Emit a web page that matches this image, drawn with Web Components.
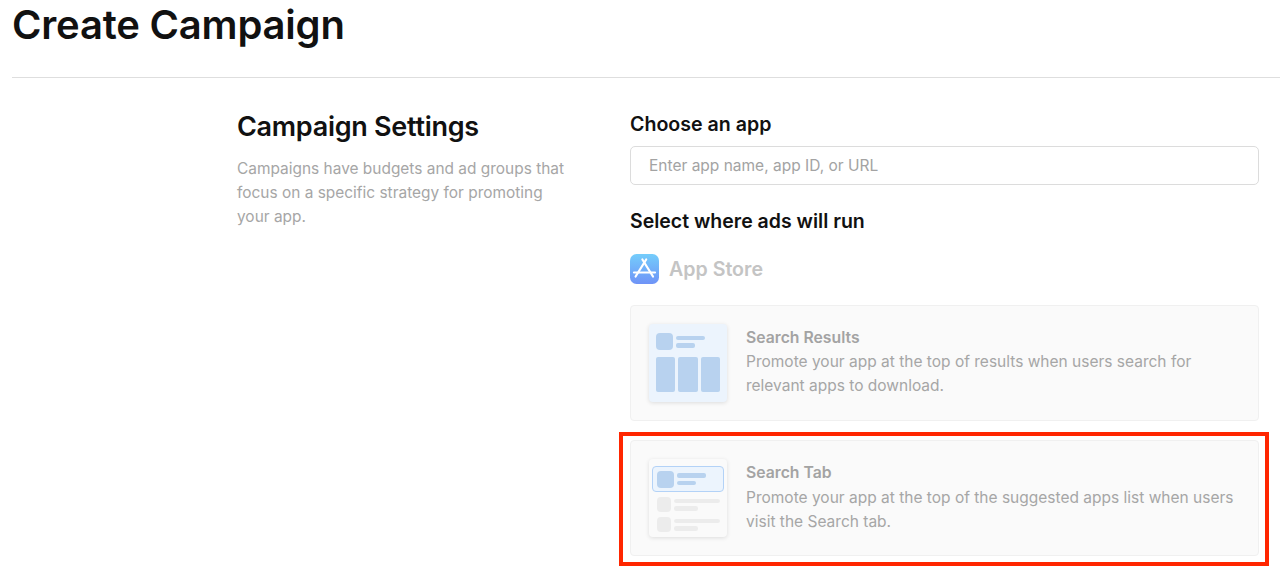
<!DOCTYPE html>
<html>
<head>
<meta charset="utf-8">
<title>Create Campaign</title>
<style>
  html, body { margin: 0; background: #fff; overflow: hidden; }
  body { font-family: Inter, "Liberation Sans", sans-serif; color: #111; height: 581px; }
</style>
</head>
<body>
<campaign-page></campaign-page>

<script>
// page title with rule under it
class PageHeader extends HTMLElement {
  constructor() {
    super();
    var shadow = this.attachShadow({mode: 'open'});
    shadow.innerHTML = `
      <style>
      :host { display: block; margin-left: 12px; height: 78px; border-bottom: 1px solid #dedede; box-sizing: border-box; }
      h1 { margin: 0; font-size: 40px; font-weight: 600; line-height: 50px; letter-spacing: -0.2px; color: #111; }
      </style>
      <h1><slot></slot></h1>
    `;
  }
}
customElements.define('page-header', PageHeader);

// left column
class SettingsIntro extends HTMLElement {
  constructor() {
    super();
    var shadow = this.attachShadow({mode: 'open'});
    shadow.innerHTML = `
      <style>
      :host { display: block; width: 340px; }
      h2 { margin: 0 0 15px; font-size: 27px; font-weight: 600; line-height: 30px; letter-spacing: -0.28px; color: #111; }
      p { margin: 0; font-size: 15.45px; line-height: 24px; color: #a6a6a6; }
      </style>
      <h2><slot name="title"></slot></h2>
      <p><slot></slot></p>
    `;
  }
}
customElements.define('settings-intro', SettingsIntro);

class AppField extends HTMLElement {
  constructor() {
    super();
    var shadow = this.attachShadow({mode: 'open'});
    shadow.innerHTML = `
      <style>
      :host { display: block; }
      label { display: block; font-size: 19.6px; font-weight: 600; line-height: 24px; color: #111; margin-bottom: 10px; }
      .box { box-sizing: border-box; height: 39px; border: 1.5px solid #dcdcdc; border-radius: 5px; padding: 0 18px; display: flex; align-items: center; font-size: 15.5px; color: #a3a3a3; }
      </style>
      <label><slot name="label"></slot></label>
      <div class="box"><slot></slot></div>
    `;
  }
}
customElements.define('app-field', AppField);

class StoreHeading extends HTMLElement {
  constructor() {
    super();
    var shadow = this.attachShadow({mode: 'open'});
    shadow.innerHTML = `
      <style>
      :host { display: flex; align-items: center; gap: 10px; height: 30px; font-size: 19.6px; font-weight: 600; color: #c4c4c4; }
      svg { display: block; width: 29px; height: 30px; }
      </style>
      <svg viewBox="0 0 29 30">
        <defs>
          <linearGradient id="g" x1="0" y1="0" x2="0" y2="1">
            <stop offset="0" stop-color="#74cdfb"/>
            <stop offset="1" stop-color="#6f93f7"/>
          </linearGradient>
        </defs>
        <rect width="29" height="30" rx="6.5" fill="url(#g)"/>
        <g stroke="#fff" stroke-width="2.2" stroke-linecap="round" fill="none">
          <path d="M12.4 5.5 L23 22.5"/>
          <path d="M16.2 5.5 L5.6 22.5"/>
          <path d="M4 18.5 H25"/>
        </g>
      </svg>
      <span><slot></slot></span>
    `;
  }
}
customElements.define('store-heading', StoreHeading);

// thumbnail for search results card
class ResultsThumb extends HTMLElement {
  constructor() {
    super();
    var shadow = this.attachShadow({mode: 'open'});
    shadow.innerHTML = `
      <style>
      :host { display: block; width: 78px; height: 78px; box-sizing: border-box; background: #ecf4fd; border-radius: 4px; box-shadow: 0 1px 4px rgba(0,0,0,.12); padding: 9px 7px 10px; }
      .top { display: flex; gap: 3px; align-items: center; height: 17px; margin-bottom: 7px; }
      .icon { width: 17px; height: 17px; border-radius: 4px; background: #b8d2ef; }
      .lines { display: flex; flex-direction: column; gap: 3px; }
      .lines i { display: block; height: 4.5px; border-radius: 2px; background: #b8d2ef; }
      .lines i:first-child { width: 29px; }
      .lines i:last-child { width: 19px; }
      .cols { display: grid; grid-template-columns: repeat(3, 1fr); gap: 3px; height: 35px; }
      .cols i { background: #b8d2ef; border-radius: 2px; }
      </style>
      <div class="top"><div class="icon"></div><div class="lines"><i></i><i></i></div></div>
      <div class="cols"><i></i><i></i><i></i></div>
    `;
  }
}
customElements.define('results-thumb', ResultsThumb);

// thumbnail for search tab card
class TabThumb extends HTMLElement {
  constructor() {
    super();
    var shadow = this.attachShadow({mode: 'open'});
    shadow.innerHTML = `
      <style>
      :host { display: block; width: 78px; height: 78px; box-sizing: border-box; background: #fafafa; border-radius: 4px; box-shadow: 0 1px 4px rgba(0,0,0,.12); padding: 7px 3px 0; }
      .hit { box-sizing: border-box; height: 26px; background: #ecf4fd; border: 1.5px solid #b3d2f7; border-radius: 4px; display: flex; align-items: center; gap: 3px; padding: 0 3.5px; margin-bottom: 5px; }
      .hit b { width: 17px; height: 17px; border-radius: 4px; background: #b8d2ef; }
      .hit div { display: flex; flex-direction: column; gap: 3px; }
      .hit i { display: block; height: 4.5px; border-radius: 2px; background: #b8d2ef; }
      .hit i:first-child { width: 29px; }
      .hit i:last-child { width: 19px; }
      .row { display: flex; gap: 3px; align-items: center; height: 15px; margin: 0 4.5px 5px; }
      .row b { width: 14px; height: 15px; border-radius: 4px; background: #ececec; }
      .row div { display: flex; flex-direction: column; gap: 3px; }
      .row i { display: block; height: 4.5px; border-radius: 2px; background: #ececec; }
      .row i:first-child { width: 46px; }
      .row i:last-child { width: 24px; }
      </style>
      <div class="hit"><b></b><div><i></i><i></i></div></div>
      <div class="row"><b></b><div><i></i><i></i></div></div>
      <div class="row"><b></b><div><i></i><i></i></div></div>
    `;
  }
}
customElements.define('tab-thumb', TabThumb);

class PlacementCard extends HTMLElement {
  constructor() {
    super();
    var shadow = this.attachShadow({mode: 'open'});
    shadow.innerHTML = `
      <style>
      :host { display: flex; position: relative; box-sizing: border-box; height: 116px; gap: 19px; align-items: center; padding: 0 18px; background: #fafafa; border: 1px solid #f0f0f0; border-radius: 4px; }
      :host([highlighted])::after { content: ""; position: absolute; left: -12px; top: -9px; right: -11px; bottom: -11px; border: 4px solid #ff2600; pointer-events: none; }
      .text { flex: 1; padding-bottom: 3px; }
      h3 { margin: 0; font-size: 15.75px; font-weight: 600; line-height: 24px; color: #a3a3a3; }
      p { margin: 0; font-size: 15.5px; line-height: 24px; color: #a6a6a6; }
      :host([highlighted]) .text { padding-bottom: 2px; }
      :host([highlighted]) h3 { margin-bottom: 1px; }
      </style>
      <slot name="thumb"></slot>
      <div class="text">
        <h3><slot name="title"></slot></h3>
        <p><slot></slot></p>
      </div>
    `;
  }
}
customElements.define('placement-card', PlacementCard);

class CampaignPage extends HTMLElement {
  constructor() {
    super();
    var shadow = this.attachShadow({mode: 'open'});
    shadow.innerHTML = `
      <style>
      :host { display: block; }
      .grid { display: grid; grid-template-columns: 393px 629px; padding: 34px 0 0 237px; }
      h2 { margin: 24px 0 21px; font-size: 19.5px; font-weight: 600; line-height: 24px; color: #111; }
      store-heading { margin-bottom: 21px; }
      .cards { display: flex; flex-direction: column; gap: 19px; }
      </style>
      <page-header>Create Campaign</page-header>
      <div class="grid">
        <settings-intro>
          <span slot="title">Campaign Settings</span>
          Campaigns have budgets and ad groups that focus on a specific strategy for promoting your app.
        </settings-intro>
        <div>
          <app-field>
            <span slot="label">Choose an app</span>
            Enter app name, app ID, or URL
          </app-field>
          <h2>Select where ads will run</h2>
          <store-heading>App Store</store-heading>
          <div class="cards">
            <placement-card>
              <results-thumb slot="thumb"></results-thumb>
              <span slot="title">Search Results</span>
              Promote your app at the top of results when users search for relevant apps to download.
            </placement-card>
            <placement-card highlighted>
              <tab-thumb slot="thumb"></tab-thumb>
              <span slot="title">Search Tab</span>
              Promote your app at the top of the suggested apps list when users visit the Search tab.
            </placement-card>
          </div>
        </div>
      </div>
    `;
  }
}
customElements.define('campaign-page', CampaignPage);
</script>
</body>
</html>
